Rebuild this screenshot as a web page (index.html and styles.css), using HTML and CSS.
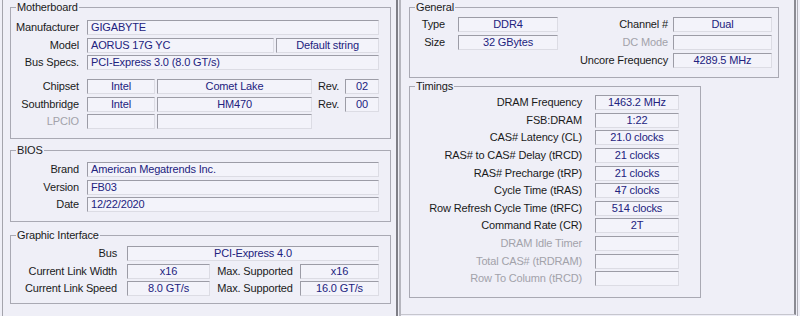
FILE: index.html
```html
<!DOCTYPE html>
<html lang="en">
<head>
  <meta charset="UTF-8">
  <title>CPU-Z Mainboard / Memory</title>
  <link rel="stylesheet" href="styles.css">
</head>
<body>
  <div class="pane pane-left">
    <section class="group g-mb">
      <div class="group-title">Motherboard</div>
      <div class="rows rows-top">
        <div class="row"><span class="lbl">Manufacturer</span><span class="fld fill al">GIGABYTE</span></div>
        <div class="row"><span class="lbl">Model</span><span class="fld w-model al">AORUS 17G YC</span><span class="fld fill">Default string</span></div>
        <div class="row"><span class="lbl">Bus Specs.</span><span class="fld fill al">PCI-Express 3.0 (8.0 GT/s)</span></div>
      </div>
      <div class="rows rows-chip">
        <div class="row"><span class="lbl">Chipset</span><span class="fld w-vendor">Intel</span><span class="fld w-chip">Comet Lake</span><span class="rev">Rev.</span><span class="fld fill">02</span></div>
        <div class="row"><span class="lbl">Southbridge</span><span class="fld w-vendor">Intel</span><span class="fld w-chip">HM470</span><span class="rev">Rev.</span><span class="fld fill">00</span></div>
        <div class="row"><span class="lbl off">LPCIO</span><span class="fld w-vendor"></span><span class="fld w-chip"></span></div>
      </div>
    </section>

    <section class="group g-bios">
      <div class="group-title">BIOS</div>
      <div class="rows">
        <div class="row"><span class="lbl">Brand</span><span class="fld fill al">American Megatrends Inc.</span></div>
        <div class="row"><span class="lbl">Version</span><span class="fld fill al">FB03</span></div>
        <div class="row"><span class="lbl">Date</span><span class="fld fill al">12/22/2020</span></div>
      </div>
    </section>

    <section class="group g-gfx">
      <div class="group-title">Graphic Interface</div>
      <div class="rows">
        <div class="row"><span class="lbl">Bus</span><span class="fld fill">PCI-Express 4.0</span></div>
        <div class="row"><span class="lbl">Current Link Width</span><span class="fld w-link">x16</span><span class="max">Max. Supported</span><span class="fld fill">x16</span></div>
        <div class="row"><span class="lbl">Current Link Speed</span><span class="fld w-link">8.0 GT/s</span><span class="max">Max. Supported</span><span class="fld fill">16.0 GT/s</span></div>
      </div>
    </section>
  </div>

  <div class="divider"></div>

  <div class="pane pane-right">
    <section class="group g-gen">
      <div class="group-title">General</div>
      <div class="rows">
        <div class="row"><span class="lbl">Type</span><span class="fld w-gen">DDR4</span><span class="lbl lbl-r">Channel #</span><span class="fld w-gen2">Dual</span></div>
        <div class="row"><span class="lbl">Size</span><span class="fld w-gen">32 GBytes</span><span class="lbl lbl-r off">DC Mode</span><span class="fld w-gen2"></span></div>
        <div class="row"><span class="lbl lbl-r">Uncore Frequency</span><span class="fld w-gen2">4289.5 MHz</span></div>
      </div>
    </section>

    <section class="group g-tim">
      <div class="group-title">Timings</div>
      <div class="rows">
        <div class="row"><span class="lbl">DRAM Frequency</span><span class="fld w-tim">1463.2 MHz</span></div>
        <div class="row"><span class="lbl">FSB:DRAM</span><span class="fld w-tim">1:22</span></div>
        <div class="row"><span class="lbl">CAS# Latency (CL)</span><span class="fld w-tim">21.0 clocks</span></div>
        <div class="row"><span class="lbl">RAS# to CAS# Delay (tRCD)</span><span class="fld w-tim">21 clocks</span></div>
        <div class="row"><span class="lbl">RAS# Precharge (tRP)</span><span class="fld w-tim">21 clocks</span></div>
        <div class="row"><span class="lbl">Cycle Time (tRAS)</span><span class="fld w-tim">47 clocks</span></div>
        <div class="row"><span class="lbl">Row Refresh Cycle Time (tRFC)</span><span class="fld w-tim">514 clocks</span></div>
        <div class="row"><span class="lbl">Command Rate (CR)</span><span class="fld w-tim">2T</span></div>
        <div class="row"><span class="lbl off">DRAM Idle Timer</span><span class="fld w-tim"></span></div>
        <div class="row"><span class="lbl off">Total CAS# (tRDRAM)</span><span class="fld w-tim"></span></div>
        <div class="row"><span class="lbl off">Row To Column (tRCD)</span><span class="fld w-tim"></span></div>
      </div>
    </section>
  </div>

  <div class="edge"></div>
</body>
</html>
```

FILE: styles.css
```css
:root {
  --bg: #efeff7;
  --line: #a9a9b3;
  --value: #22227e;
  --text: #1a1a1a;
  --off: #a2a2aa;
}
* { box-sizing: border-box; margin: 0; padding: 0; }
body {
  width: 800px;
  height: 316px;
  overflow: hidden;
  display: flex;
  align-items: flex-start;
  font: 11px/13px "Liberation Sans", Arial, sans-serif;
  letter-spacing: -0.15px;
  background: var(--bg);
  color: var(--text);
}

/* two captured windows side by side */
.pane-left {
  width: 393px;
  height: 316px;
  margin-left: 2px;
  border-left: 1px solid #a4a4ac;
}
.divider {
  width: 5px;
  height: 316px;
  margin-left: 1px;
  border-left: 2px solid #7e7e86;
  border-right: 2px solid #b6b6be;
}
.pane-right {
  width: 395px;
  height: 315px;
  border-right: 2px solid #8a8a92;
  border-bottom: 1px solid #c6c6ce;
}
.edge {
  width: 1px;
  height: 316px;
  margin-left: 1px;
  background: #aeaeb6;
}

/* group boxes */
.group {
  border: 1px solid var(--line);
  margin-left: 7px;
}
.pane-right .group { margin-left: 8px; }
.group-title {
  width: max-content;
  margin: -7px 0 0 5px;
  padding: 0 1px;
  background: var(--bg);
}
.rows {
  display: flex;
  flex-direction: column;
  gap: 2.65px;
}
.row {
  display: flex;
  align-items: center;
  height: 15px;
}
.lbl {
  flex: none;
  text-align: right;
  white-space: nowrap;
}
.off { color: var(--off); }
.fld {
  flex: none;
  height: 15px;
  border: 1px solid;
  border-color: #9c9ca6 #dcdce4 #dcdce4 #9c9ca6;
  background: #f3f3fa;
  color: var(--value);
  text-align: center;
  white-space: nowrap;
  overflow: hidden;
}
.fld + .fld { margin-left: 2px; }
.fill { flex: 1; }
.al { text-align: left; padding-left: 3px; }

/* Motherboard */
.g-mb {
  width: 381px;
  margin-top: 7px;
  padding: 0 11px 8.7px 0;
}
.g-mb .rows-top { margin-top: 6px; }
.g-mb .rows-chip { margin-top: 8.7px; }
.g-mb .lbl, .g-bios .lbl { width: 68px; margin-right: 8px; }
.w-model { width: 187px; }
.w-vendor { width: 68px; }
.w-chip { width: 155px; }
.rev { width: 33px; text-align: center; }

/* BIOS */
.g-bios {
  width: 381px;
  margin-top: 11px;
  padding: 0 11px 8.7px 0;
}
.g-bios .rows { margin-top: 5px; }

/* Graphic Interface */
.g-gfx {
  width: 381px;
  margin-top: 13px;
  padding: 0 11px 6.7px 0;
}
.g-gfx .rows { margin-top: 4px; }
.g-gfx .lbl { width: 106px; margin-right: 10px; }
.w-link { width: 83px; }
.max { width: 90px; text-align: center; white-space: nowrap; }

/* General */
.g-gen {
  width: 370px;
  margin-top: 7px;
  padding: 0 6px 9px 0;
}
.g-gen .rows { margin-top: 3px; gap: 3px; }
.g-gen .lbl { width: 35px; margin-right: 13px; }
.g-gen .lbl-r { flex: 1; width: auto; margin-right: 5px; }
.w-gen { width: 100px; }
.w-gen2 { width: 99px; }

/* Timings */
.g-tim {
  width: 292px;
  margin-top: 8px;
  padding: 0 21px 10.5px 0;
}
.g-tim .rows { margin-top: 2px; }
.g-tim .lbl { width: 172px; margin-right: 13px; }
.w-tim { width: 84px; }
```
